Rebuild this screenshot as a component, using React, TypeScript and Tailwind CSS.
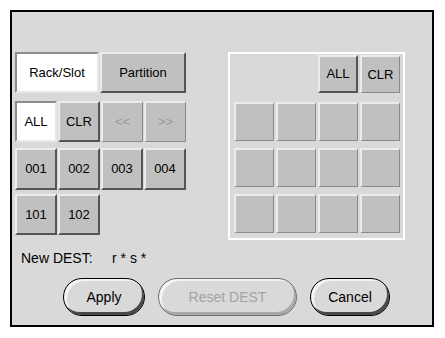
const raised =
  "flex items-center justify-center bg-[#c0c0c0] border-2 border-t-[#ececec] border-l-[#ececec] border-b-[#555555] border-r-[#555555] text-black"
const pressed =
  "flex items-center justify-center bg-white border-2 border-t-[#8c8c8c] border-l-[#8c8c8c] border-b-[#e8e8e8] border-r-[#e8e8e8] text-black"
const flat =
  "flex items-center justify-center bg-[#c0c0c0] border-2 border-t-[#ececec] border-l-[#ececec] border-b-[#8a8a8a] border-r-[#8a8a8a] border-b-[1px] border-r-[1px]"

const App = () => {
  const font = { fontFamily: '"Liberation Sans", Arial, sans-serif' }

  return (
    <div className="w-[445px] h-[338px] bg-white pt-[10px] pl-[10px]" style={font}>
      <div className="w-[424px] h-[317px] border-2 border-black bg-[#d9d9d9] text-[13px] flex flex-col">
        <div className="flex pt-[40px] pl-[3px]">
          {/* left side */}
          <div className="flex flex-col w-[172px]">
            <div className="flex gap-[1px] h-[41px]">
              <div className={`${pressed} w-[84px]`}>Rack/Slot</div>
              <div className={`${raised} w-[86px]`}>Partition</div>
            </div>
            <div className="flex gap-[1px] h-[41px] mt-[8px]">
              <div className={`${pressed} w-[42px]`}>ALL</div>
              <div className={`${raised} w-[42px]`}>CLR</div>
              <div className={`${flat} w-[42px] text-[#9a9a9a]`}>&lt;&lt;</div>
              <div className={`${flat} w-[42px] text-[#9a9a9a]`}>&gt;&gt;</div>
            </div>
            <div className="flex gap-[1px] h-[42px] mt-[6px]">
              {["001", "002", "003", "004"].map((n) => (
                <div key={n} className={`${raised} w-[42px]`}>{n}</div>
              ))}
            </div>
            <div className="flex gap-[1px] h-[41px] mt-[4px]">
              {["101", "102"].map((n) => (
                <div key={n} className={`${raised} w-[42px]`}>{n}</div>
              ))}
            </div>
            <div className="flex mt-[16px] pl-[6px] leading-none text-[14px] whitespace-nowrap">
              <span className="w-[91px]">New DEST:</span>
              <span>r * s *</span>
            </div>
          </div>

          {/* right panel */}
          <div className="ml-[41px] w-[177px] h-[188px] border-2 border-white pt-[1px] pl-[4px] pr-[3px]">
            <div className="flex justify-end gap-[2px] h-[38px]">
              <div className={`${raised} w-[40px]`}>ALL</div>
              <div className={`${flat} w-[40px]`}>CLR</div>
            </div>
            <div className="grid grid-cols-4 gap-x-[2px] gap-y-[7px] mt-[9px]">
              {Array.from({ length: 12 }).map((_, i) => (
                <div key={i} className={`${flat} h-[39px]`} />
              ))}
            </div>
          </div>
        </div>

        <div className="flex gap-[13px] pl-[51px] mt-[13px]">
          <div className="w-[82px] h-[38px] rounded-full border border-black bg-[#d9d9d9] shadow-[inset_-2px_-3px_0_#4a4a4a,inset_3px_2px_0_#f4f4f4] flex items-center justify-center text-[14px]">
            Apply
          </div>
          <div className="w-[139px] h-[38px] rounded-full border border-[#6e6e6e] bg-[#d9d9d9] shadow-[inset_-2px_-3px_0_#a8a8a8,inset_3px_2px_0_#f4f4f4] flex items-center justify-center text-[14px] text-[#a3a3a3]">
            Reset DEST
          </div>
          <div className="w-[80px] h-[38px] rounded-full border border-black bg-[#d9d9d9] shadow-[inset_-2px_-3px_0_#4a4a4a,inset_3px_2px_0_#f4f4f4] flex items-center justify-center text-[14px]">
            Cancel
          </div>
        </div>
      </div>
    </div>
  )
}

export default App
